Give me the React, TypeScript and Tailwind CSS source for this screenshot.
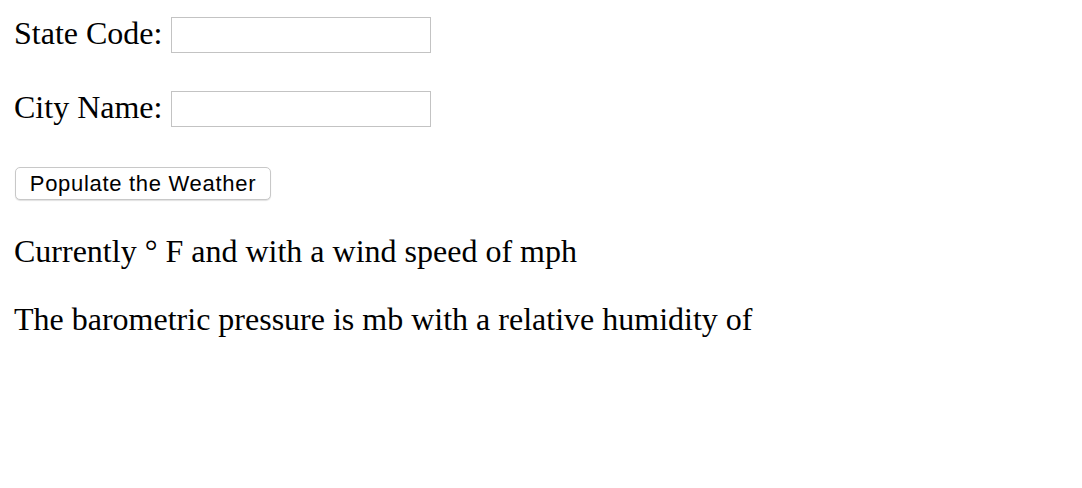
import React from "react";

export default function App() {
  return (
    <div className="min-h-[488px] w-[1082px] bg-white pl-[14px] pt-[17px] text-black font-['Liberation_Serif','Times_New_Roman',serif] text-[32px]">
      <div className="flex items-start gap-[9px]">
        <label className="leading-[33px]">State Code:</label>
        <input type="text" className="h-[36px] w-[260px] border border-[#c3c3c3] bg-white outline-none" />
      </div>
      <div className="mt-[38px] flex items-start gap-[9px]">
        <label className="leading-[33px]">City Name:</label>
        <input type="text" className="h-[36px] w-[260px] border border-[#c3c3c3] bg-white outline-none" />
      </div>
      <div className="mt-[40px] pl-[1px]">
        <button
          type="button"
          className="flex h-[33px] w-[256px] items-center justify-center rounded-[5px] border border-[#c8c8c8] bg-white font-['Liberation_Sans',Arial,sans-serif] text-[22px] tracking-[0.7px] text-black shadow-[0_1px_1px_rgba(0,0,0,0.12)]"
        >
          Populate the Weather
        </button>
      </div>
      <p className="mt-[33px] leading-[36px]">Currently ° F and with a wind speed of mph</p>
      <p className="mt-[32px] leading-[36px]">The barometric pressure is mb with a relative humidity of</p>
    </div>
  );
}
